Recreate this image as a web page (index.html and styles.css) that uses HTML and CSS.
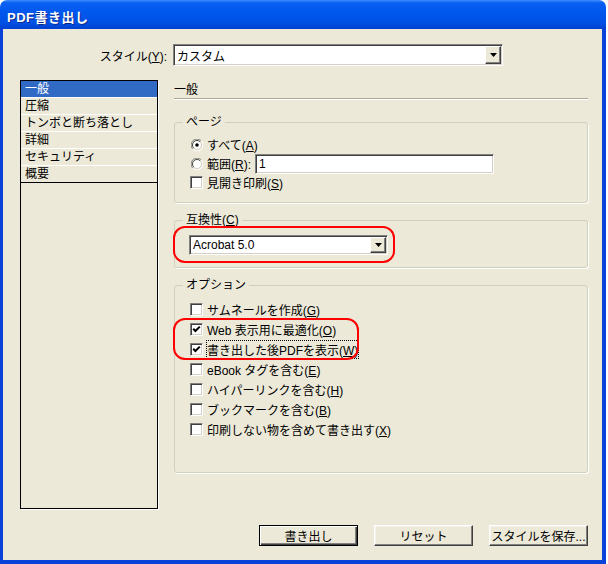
FILE: index.html
```html
<!DOCTYPE html>
<html lang="ja">
<head>
  <meta charset="UTF-8" />
  <title>PDF書き出し</title>
  <link rel="stylesheet" href="styles.css">
</head>
<body>
  <div class="window">
    <div class="titlebar"><span class="title">PDF書き出し</span></div>

    <div class="client">
      <div class="style-row">
        <label class="style-label">スタイル(<u>Y</u>):</label>
        <div class="combo combo-style">
          <span class="combo-text">カスタム</span>
          <span class="drop"><svg width="7" height="4" viewBox="0 0 7 4"><polygon points="0,0 7,0 3.5,4" fill="#000"/></svg></span>
        </div>
      </div>

      <div class="main">
        <ul class="nav">
          <li class="sel">一般</li>
          <li>圧縮</li>
          <li>トンボと断ち落とし</li>
          <li>詳細</li>
          <li>セキュリティ</li>
          <li class="last">概要</li>
        </ul>

        <div class="panel">
          <div class="panel-head">一般</div>

          <fieldset class="group">
            <legend>ページ</legend>
            <div class="opts page-opts">
              <div class="opt">
                <span class="box"><svg width="12" height="12" viewBox="0 0 12 12"><circle cx="6" cy="6" r="4.5" fill="#fff"/><path d="M10.2 1.8A5.9 5.9 0 0 0 1.8 10.2" fill="none" stroke="#808080"/><path d="M1.8 10.2A5.9 5.9 0 0 0 10.2 1.8" fill="none" stroke="#fff"/><path d="M9.2 2.8A4.5 4.5 0 0 0 2.8 9.2" fill="none" stroke="#404040"/><path d="M2.8 9.2A4.5 4.5 0 0 0 9.2 2.8" fill="none" stroke="#d4d0c8"/><circle cx="6" cy="6" r="1.8" fill="#000"/></svg></span>
                <span>すべて(<u>A</u>)</span>
              </div>
              <div class="opt">
                <span class="box"><svg width="12" height="12" viewBox="0 0 12 12"><circle cx="6" cy="6" r="4.5" fill="#fff"/><path d="M10.2 1.8A5.9 5.9 0 0 0 1.8 10.2" fill="none" stroke="#808080"/><path d="M1.8 10.2A5.9 5.9 0 0 0 10.2 1.8" fill="none" stroke="#fff"/><path d="M9.2 2.8A4.5 4.5 0 0 0 2.8 9.2" fill="none" stroke="#404040"/><path d="M2.8 9.2A4.5 4.5 0 0 0 9.2 2.8" fill="none" stroke="#d4d0c8"/></svg></span>
                <span>範囲(<u>R</u>):</span>
                <span class="field">1</span>
              </div>
              <div class="opt">
                <span class="box"><span class="check"></span></span>
                <span>見開き印刷(<u>S</u>)</span>
              </div>
            </div>
          </fieldset>

          <fieldset class="group group-compat">
            <legend>互換性(<u>C</u>)</legend>
            <div class="opts compat-opts">
              <div class="combo combo-compat">
                <span class="combo-text">Acrobat 5.0</span>
                <span class="drop"><svg width="7" height="4" viewBox="0 0 7 4"><polygon points="0,0 7,0 3.5,4" fill="#000"/></svg></span>
              </div>
            </div>
          </fieldset>

          <fieldset class="group group-options">
            <legend>オプション</legend>
            <div class="opts option-opts">
              <div class="opt"><span class="box"><span class="check"></span></span><span>サムネールを作成(<u>G</u>)</span></div>
              <div class="opt"><span class="box"><span class="check on"><svg width="9" height="9" viewBox="0 0 9 9"><path d="M1.2 3.8L3.4 6L7.8 1.6" fill="none" stroke="#000" stroke-width="2"/></svg></span></span><span>Web 表示用に最適化(<u>O</u>)</span></div>
              <div class="opt"><span class="box"><span class="check on"><svg width="9" height="9" viewBox="0 0 9 9"><path d="M1.2 3.8L3.4 6L7.8 1.6" fill="none" stroke="#000" stroke-width="2"/></svg></span></span><span class="focus">書き出した後PDFを表示(<u>W</u>)</span></div>
              <div class="opt"><span class="box"><span class="check"></span></span><span>eBook タグを含む(<u>E</u>)</span></div>
              <div class="opt"><span class="box"><span class="check"></span></span><span>ハイパーリンクを含む(<u>H</u>)</span></div>
              <div class="opt"><span class="box"><span class="check"></span></span><span>ブックマークを含む(<u>B</u>)</span></div>
              <div class="opt"><span class="box"><span class="check"></span></span><span>印刷しない物を含めて書き出す(<u>X</u>)</span></div>
            </div>
          </fieldset>

          <!-- red annotation marks -->
          <div class="mark mark-compat"></div>
          <div class="mark mark-options"></div>
        </div>
      </div>

      <div class="buttons">
        <button class="btn default">書き出し</button>
        <button class="btn">リセット</button>
        <button class="btn">スタイルを保存...</button>
      </div>
    </div>
  </div>
</body>
</html>
```

FILE: styles.css
```css
body { margin: 0; background: #fff; font: 12px "Liberation Sans", "Noto Sans CJK JP", sans-serif; color: #000; }
u { text-underline-offset: 1px; }

.window { width: 606px; height: 564px; display: flex; flex-direction: column; }
.titlebar {
  height: 29px; box-sizing: border-box; padding: 3px 0 0 7px;
  border-radius: 7px 7px 0 0;
  background: linear-gradient(to bottom, #3d8cff 0, #0a5ff2 3px, #0058ee 40%, #0050e4 80%, #0040cf 100%);
  display: flex; align-items: center;
}
.title { color: #fff; font-weight: bold; font-size: 13px; letter-spacing: 0.5px; text-shadow: 1px 1px #0b2a8c; }

.client {
  flex: 1; background: #ece9d8;
  border: solid #0842d8; border-width: 0 4px 4px 3px;
  display: flex; flex-direction: column;
}

.style-row { display: flex; align-items: center; padding-top: 15px; }
.style-label { width: 167px; text-align: right; padding-right: 3px; box-sizing: border-box; margin-right: 3px; }

.combo {
  display: flex; height: 22px; box-sizing: border-box; padding: 1px;
  background: #fff;
  border: 1px solid; border-color: #808080 #fff #fff #808080;
  box-shadow: inset 1px 1px 0 #404040, inset -1px -1px 0 #d4d0c8;
}
.combo-style { width: 330px; }
.combo-compat { width: 199px; height: 20px; }
.combo-text { flex: 1; padding-left: 2px; display: flex; align-items: center; }
.drop {
  width: 16px; box-sizing: border-box; background: #ece9d8;
  border: 1px solid; border-color: #fff #404040 #404040 #fff;
  box-shadow: inset -1px -1px 0 #808080;
  display: flex; align-items: center; justify-content: center;
}

.main { display: flex; gap: 16px; margin-top: 14px; padding-left: 17px; }

.nav {
  width: 138px; height: 429px; box-sizing: border-box; margin: 0; padding: 0; list-style: none;
  border: 1px solid #000; box-shadow: 1px 1px 0 #fff;
}
.nav li { height: 16px; line-height: 16px; padding-left: 4px; border-bottom: 1px solid #fff; }
.nav li.sel { background: #316ac5; color: #fff; }
.nav li.last { border-bottom-color: #000; }

.panel { width: 414px; position: relative; }
.panel-head { height: 15px; padding-top: 3px; line-height: 14px; border-bottom: 1px solid #aca899; box-shadow: 0 1px 0 #fff; }

.group { margin: 16px 0 0; padding: 0; border: 1px solid #d0d0bf; border-radius: 3px; box-shadow: 1px 1px 0 #fff; min-inline-size: 0; }
.group legend { margin-left: 8px; padding: 0 3px; line-height: 14px; }
.group-compat, .group-options { margin-top: 10px; }

.opts { padding-left: 15px; }
.page-opts { padding-top: 6px; padding-bottom: 10px; }
.compat-opts { padding: 8px 0 12px 14px; }
.option-opts { padding-top: 7px; padding-bottom: 33px; }

.opt { display: flex; align-items: center; gap: 4px; height: 19px; }
.option-opts .opt { height: 20px; }
.box { width: 13px; height: 13px; display: flex; align-items: center; justify-content: center; }
.check {
  width: 13px; height: 13px; box-sizing: border-box; background: #fff;
  border: 1px solid; border-color: #808080 #fff #fff #808080;
  box-shadow: inset 1px 1px 0 #404040, inset -1px -1px 0 #d4d0c8;
  display: flex; align-items: center; justify-content: center;
}
.check svg { display: block; }
.focus { outline: 1px dotted #000; outline-offset: 0; }

.field {
  width: 239px; height: 20px; box-sizing: border-box; padding-left: 3px; background: #fff;
  border: 1px solid; border-color: #808080 #fff #fff #808080;
  box-shadow: inset 1px 1px 0 #404040, inset -1px -1px 0 #d4d0c8;
  display: flex; align-items: center;
}

.mark { position: absolute; border: 2px solid #f00; border-radius: 12px; box-sizing: border-box; }
.mark-compat { left: -1px; top: 146px; width: 222px; height: 37px; }
.mark-options { left: -1px; top: 238px; width: 186px; height: 42px; }

.buttons { display: flex; justify-content: flex-end; gap: 16px; margin-top: 16px; padding-right: 14px; }
.btn {
  width: 99px; height: 21px; box-sizing: border-box; padding: 0;
  font: inherit; color: #000; background: #ece9d8;
  border: 1px solid; border-color: #fff #404040 #404040 #fff;
  box-shadow: inset -1px -1px 0 #808080, inset 1px 1px 0 #f4f2ea;
}
.btn.default { border: 1px solid #000; box-shadow: inset 1px 1px 0 #fff, inset -1px -1px 0 #404040, inset -2px -2px 0 #808080; }
```
